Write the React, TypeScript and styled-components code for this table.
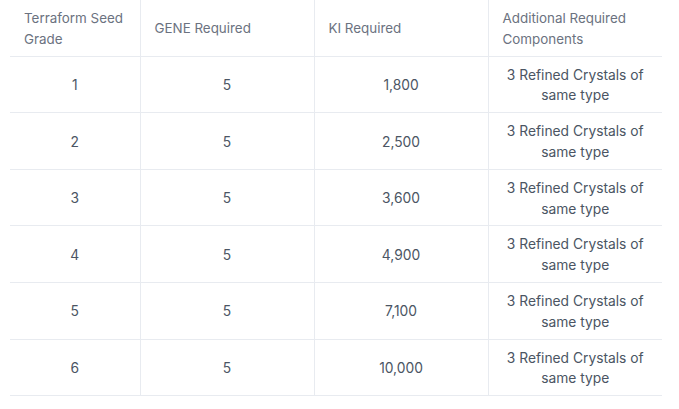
import React from "react";
import styled, { createGlobalStyle } from "styled-components";

const Global = createGlobalStyle`
  html, body { margin: 0; padding: 0; background: #ffffff; }
  body { font-family: Inter, "Noto Sans", sans-serif; }
`;

const Wrap = styled.div`
  padding: 0 17px 0 10px;
`;

const Table = styled.table`
  width: 652px;
  border-collapse: collapse;
  table-layout: fixed;
  line-height: 20.8px;
`;

const Th = styled.th`
  text-align: left;
  font-weight: 400;
  font-size: 13.4px;
  color: #6b7280;
  padding: 8px 14px 6px;
  vertical-align: middle;
  border-bottom: 1px solid #e8ebf0;
  & + & { border-left: 1px solid #e8ebf0; }
`;

const Td = styled.td`
  text-align: center;
  font-size: 13.8px;
  color: #4b5563;
  padding: 8px 14px 6px;
  vertical-align: middle;
  border-bottom: 1px solid #e8ebf0;
  & + & { border-left: 1px solid #e8ebf0; }
`;

const rows = [
  ["1", "5", "1,800"],
  ["2", "5", "2,500"],
  ["3", "5", "3,600"],
  ["4", "5", "4,900"],
  ["5", "5", "7,100"],
  ["6", "5", "10,000"],
];

export default function App() {
  return (
    <Wrap>
      <Global />
      <Table>
        <colgroup>
          <col style={{ width: 130 }} />
          <col style={{ width: 174 }} />
          <col style={{ width: 174 }} />
          <col style={{ width: 174 }} />
        </colgroup>
        <thead>
          <tr>
            <Th>Terraform Seed Grade</Th>
            <Th>GENE Required</Th>
            <Th>KI Required</Th>
            <Th>Additional Required Components</Th>
          </tr>
        </thead>
        <tbody>
          {rows.map((r) => (
            <tr key={r[0]}>
              <Td>{r[0]}</Td>
              <Td>{r[1]}</Td>
              <Td>{r[2]}</Td>
              <Td>3 Refined Crystals of same type</Td>
            </tr>
          ))}
        </tbody>
      </Table>
    </Wrap>
  );
}
